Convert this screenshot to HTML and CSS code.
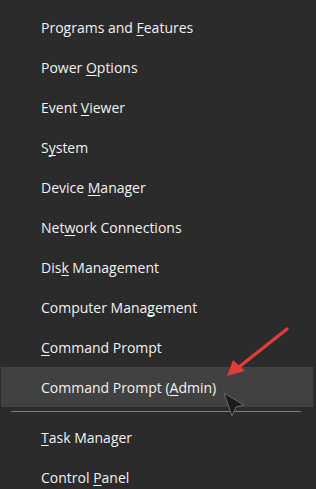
FILE: index.html
```html
<!DOCTYPE html>
<html lang="en">
<head>
  <meta charset="UTF-8">
  <title>Quick Link Menu</title>
  <link rel="stylesheet" href="styles.css">
</head>
<body>
  <ul class="menu">
    <li class="menu-item"><span>Programs and <u>F</u>eatures</span></li>
    <li class="menu-item"><span>Power <u>O</u>ptions</span></li>
    <li class="menu-item"><span>Event <u>V</u>iewer</span></li>
    <li class="menu-item"><span>S<u>y</u>stem</span></li>
    <li class="menu-item"><span>Device <u>M</u>anager</span></li>
    <li class="menu-item"><span>Net<u>w</u>ork Connections</span></li>
    <li class="menu-item"><span>Dis<u>k</u> Management</span></li>
    <li class="menu-item"><span>Computer Mana<u>g</u>ement</span></li>
    <li class="menu-item"><span><u>C</u>ommand Prompt</span></li>
    <li class="menu-item active">
      <span>Command Prompt (<u>A</u>dmin)</span>
      <!-- red pointer arrow -->
      <svg class="callout" width="80" height="60" viewBox="0 0 80 60">
        <path d="M68 4 L20 42" stroke="#e03c3c" stroke-width="3.5" stroke-linecap="round" fill="none"/>
        <path d="M8 51 L14 35 L26 46 Z" fill="#e03c3c"/>
      </svg>
      <!-- mouse cursor -->
      <svg class="cursor" width="26" height="28" viewBox="0 0 26 28">
        <path d="M2 2 L22 14 L14 16 L10 25 Z" fill="#1c1c1c" stroke="#6a6a6a" stroke-width="1" stroke-linejoin="round"/>
      </svg>
    </li>
    <li class="separator"></li>
    <li class="menu-item"><span><u>T</u>ask Manager</span></li>
    <li class="menu-item"><span>Control <u>P</u>anel</span></li>
  </ul>
</body>
</html>
```

FILE: styles.css
```css
* {
  margin: 0;
  padding: 0;
  box-sizing: border-box;
}

body {
  background: #2b2b2b;
  font-family: "Open Sans", "Noto Sans", sans-serif;
  color: #f2f2f2;
  overflow: hidden;
}

.menu {
  list-style: none;
  padding: 7px 3px 0 1px;
}

.menu-item {
  position: relative;
  height: 40px;
  display: flex;
  align-items: center;
  padding-left: 40px;
  font-size: 14px;
  white-space: nowrap;
}

.menu-item u {
  text-decoration-thickness: 1px;
  text-underline-offset: 2px;
  text-decoration-skip-ink: none;
}

.menu-item.active {
  background: #414141;
}

.separator {
  height: 1px;
  margin: 4px 12px 5px 10px;
  background: #808080;
}

.callout {
  position: absolute;
  left: 218px;
  top: -42px;
}

.cursor {
  position: absolute;
  left: 221px;
  top: 24px;
}
```
